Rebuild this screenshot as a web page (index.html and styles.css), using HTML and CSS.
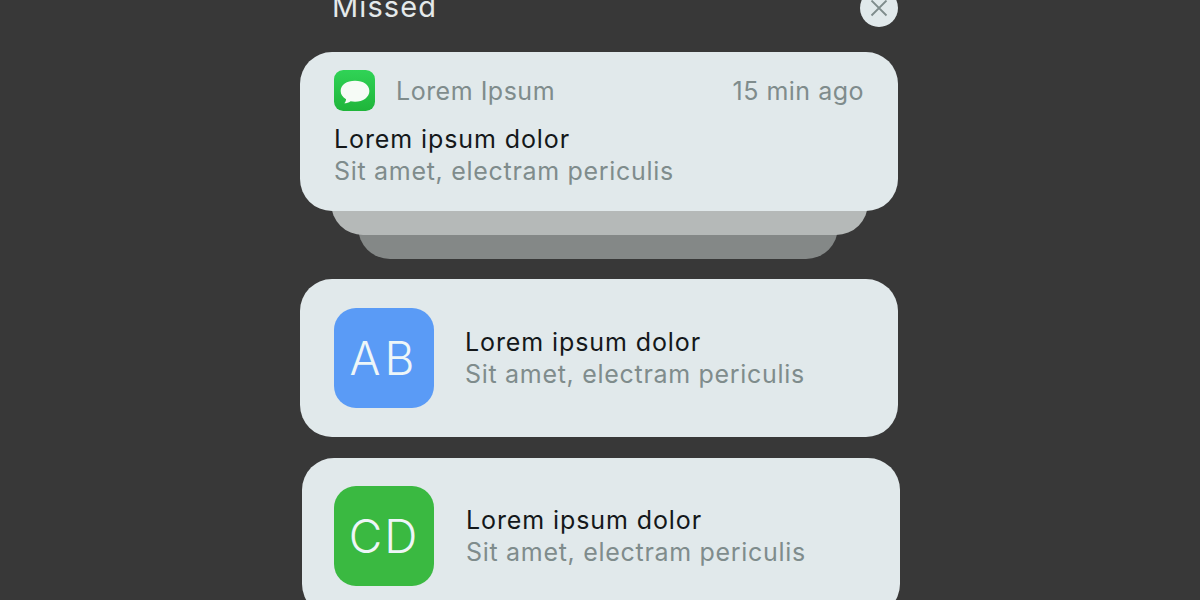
FILE: index.html
```html
<!DOCTYPE html>
<html lang="en">
<head>
    <meta charset="UTF-8">
    <title>Missed notifications</title>
    <link rel="stylesheet" href="styles.css">
</head>
<body>
    <div class="panel">
        <div class="panel-head">
            <span class="panel-title">Missed</span>
            <span class="close-btn">
                <svg width="20" height="20" viewBox="0 0 20 20"><path d="M2.500 2.500L17.500 17.500M17.500 2.500L2.500 17.500" fill="none" stroke="#7f8c8c" stroke-width="1.8"/></svg>
            </span>
        </div>

        <div class="card card-top">
            <div class="app-row">
                <span class="app-icon">
                    <svg width="41" height="41" viewBox="0 0 40 40">
                        <defs>
                            <linearGradient id="msgGreen" x1="0" y1="0" x2="0" y2="1">
                                <stop offset="0" stop-color="#30d356"/>
                                <stop offset="1" stop-color="#1fb53a"/>
                            </linearGradient>
                        </defs>
                        <rect width="40" height="40" rx="9" fill="url(#msgGreen)"/>
                        <path d="M20.500 10.500c8 0 14 4 14 10s-6 10.500-14 10.500c-1.500 0-3-.2-4.300-.5-1.800 1.300-3.800 2-6.200 2 1-1.200 1.700-2.500 1.800-4-3.500-2-5.300-4.800-5.300-8 0-6 6-10 14-10z" fill="#f6fbf6"/>
                    </svg>
                </span>
                <span class="app-name">Lorem Ipsum</span>
                <span class="app-time">15 min ago</span>
            </div>
            <div class="msg-title">Lorem ipsum dolor</div>
            <div class="msg-text">Sit amet, electram periculis</div>
        </div>
        <div class="layer layer-one"></div>
        <div class="layer layer-two"></div>

        <div class="card card-row">
            <span class="avatar avatar-blue">AB</span>
            <div class="card-body">
                <div class="msg-title">Lorem ipsum dolor</div>
                <div class="msg-text">Sit amet, electram periculis</div>
            </div>
        </div>

        <div class="card card-row card-last">
            <span class="avatar avatar-green">CD</span>
            <div class="card-body">
                <div class="msg-title">Lorem ipsum dolor</div>
                <div class="msg-text">Sit amet, electram periculis</div>
            </div>
        </div>
    </div>
</body>
</html>
```

FILE: styles.css
```css
/* Page */
html, body {
    height: 100%;
}

body {
    margin: 0;
    background-color: #383838;
    font-family: "Inter", "Liberation Sans", sans-serif;
    overflow: hidden;
}

.panel {
    display: flex;
    flex-direction: column;
    width: 598px;
    margin: -11px 0 0 300px;
}

.panel-head {
    display: flex;
    justify-content: space-between;
    align-items: center;
    height: 38px;
    padding: 0 0 0 32px;
    margin-bottom: 25px;
}

.panel-title {
    margin-bottom: 4px;
    color: #e4e9ea;
    font-size: 29px;
    letter-spacing: 1.1px;
}

.close-btn {
    display: flex;
    align-items: center;
    justify-content: center;
    width: 38px;
    height: 38px;
    border-radius: 50%;
    background-color: #e1e9eb;
}

/* Cards */
.card {
    box-sizing: border-box;
    flex: none;
    width: 598px;
    height: 159px;
    border-radius: 32px;
    background-color: #e1e9eb;
    position: relative;
    z-index: 3;
}

.card-top {
    padding: 18px 34px 0;
}

.card-row {
    display: flex;
    align-items: center;
    height: 158px;
    padding: 0 34px 1px;
    gap: 31px;
    margin-bottom: 21px;
}

.card-last {
    margin-left: 2px;
    margin-bottom: 0;
    padding-left: 32px;
    padding-bottom: 2px;
}

.card-last .card-body {
    margin-left: 1px;
}

.app-row {
    display: flex;
    align-items: center;
    height: 41px;
    margin-bottom: 12px;
}

.app-icon {
    display: flex;
    margin-right: 21px;
}

.app-name,
.app-time {
    color: #7f8c8c;
    font-size: 25px;
    letter-spacing: 0.5px;
}

.app-time {
    margin-left: auto;
}

.msg-title {
    color: #14181a;
    font-size: 25px;
    line-height: 32px;
    letter-spacing: 0.9px;
}

.msg-text {
    color: #7f8c8c;
    font-size: 25px;
    line-height: 32px;
    letter-spacing: 0.7px;
}

/* Stacked cards behind the first one */
.layer {
    flex: none;
    border-radius: 0 0 32px 32px;
}

.layer-one {
    width: 537px;
    height: 54px;
    margin: -30px 0 0 31px;
    background-color: #b5b9b8;
    z-index: 2;
}

.layer-two {
    width: 480px;
    height: 54px;
    margin: -30px 0 20px 58px;
    background-color: #848887;
    z-index: 1;
}

/* Avatars */
.avatar {
    display: flex;
    flex: none;
    align-items: center;
    justify-content: center;
    width: 100px;
    height: 100px;
    border-radius: 22px;
    color: #eef6f8;
    font-size: 46px;
    font-weight: 300;
    letter-spacing: 2px;
}

.avatar-blue {
    background-color: #5a9bf6;
    letter-spacing: 4px;
}

.avatar-green {
    background-color: #3ab941;
}
```
